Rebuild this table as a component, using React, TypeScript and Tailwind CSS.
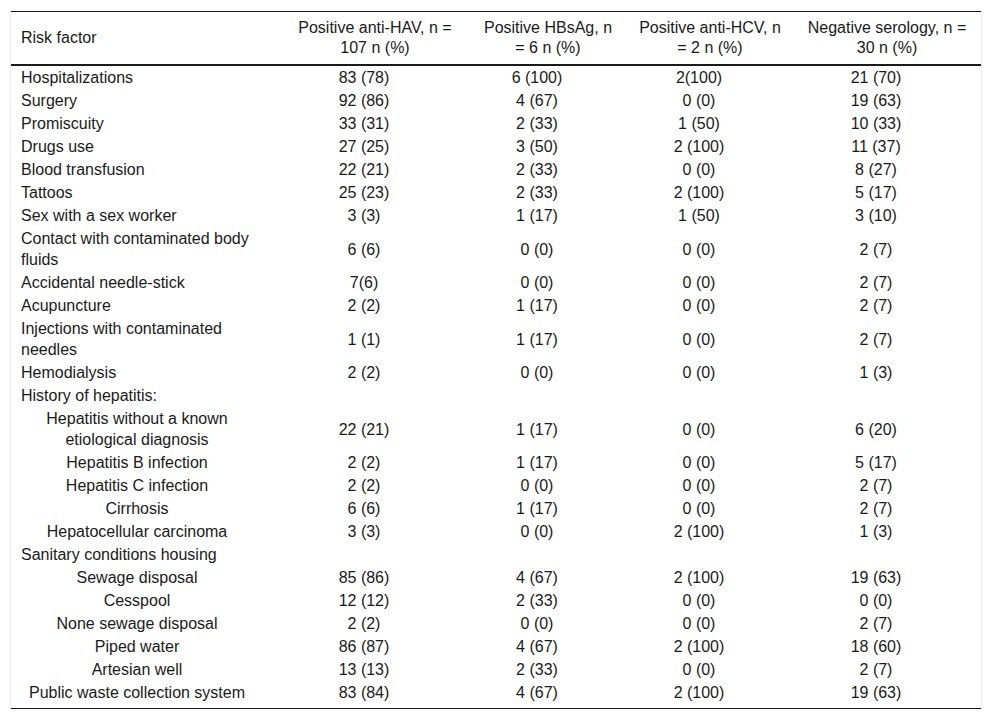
import React from 'react';

type Row = { label: string; values?: string[]; sub?: boolean };

const rows: Row[] = [
  { label: 'Hospitalizations', values: ['83 (78)', '6 (100)', '2(100)', '21 (70)'] },
  { label: 'Surgery', values: ['92 (86)', '4 (67)', '0 (0)', '19 (63)'] },
  { label: 'Promiscuity', values: ['33 (31)', '2 (33)', '1 (50)', '10 (33)'] },
  { label: 'Drugs use', values: ['27 (25)', '3 (50)', '2 (100)', '11 (37)'] },
  { label: 'Blood transfusion', values: ['22 (21)', '2 (33)', '0 (0)', '8 (27)'] },
  { label: 'Tattoos', values: ['25 (23)', '2 (33)', '2 (100)', '5 (17)'] },
  { label: 'Sex with a sex worker', values: ['3 (3)', '1 (17)', '1 (50)', '3 (10)'] },
  { label: 'Contact with contaminated body fluids', values: ['6 (6)', '0 (0)', '0 (0)', '2 (7)'] },
  { label: 'Accidental needle-stick', values: ['7(6)', '0 (0)', '0 (0)', '2 (7)'] },
  { label: 'Acupuncture', values: ['2 (2)', '1 (17)', '0 (0)', '2 (7)'] },
  { label: 'Injections with contaminated needles', values: ['1 (1)', '1 (17)', '0 (0)', '2 (7)'] },
  { label: 'Hemodialysis', values: ['2 (2)', '0 (0)', '0 (0)', '1 (3)'] },
  { label: 'History of hepatitis:' },
  { label: 'Hepatitis without a known etiological diagnosis', values: ['22 (21)', '1 (17)', '0 (0)', '6 (20)'], sub: true },
  { label: 'Hepatitis B infection', values: ['2 (2)', '1 (17)', '0 (0)', '5 (17)'], sub: true },
  { label: 'Hepatitis C infection', values: ['2 (2)', '0 (0)', '0 (0)', '2 (7)'], sub: true },
  { label: 'Cirrhosis', values: ['6 (6)', '1 (17)', '0 (0)', '2 (7)'], sub: true },
  { label: 'Hepatocellular carcinoma', values: ['3 (3)', '0 (0)', '2 (100)', '1 (3)'], sub: true },
  { label: 'Sanitary conditions housing' },
  { label: 'Sewage disposal', values: ['85 (86)', '4 (67)', '2 (100)', '19 (63)'], sub: true },
  { label: 'Cesspool', values: ['12 (12)', '2 (33)', '0 (0)', '0 (0)'], sub: true },
  { label: 'None sewage disposal', values: ['2 (2)', '0 (0)', '0 (0)', '2 (7)'], sub: true },
  { label: 'Piped water', values: ['86 (87)', '4 (67)', '2 (100)', '18 (60)'], sub: true },
  { label: 'Artesian well', values: ['13 (13)', '2 (33)', '0 (0)', '2 (7)'], sub: true },
  { label: 'Public waste collection system', values: ['83 (84)', '4 (67)', '2 (100)', '19 (63)'], sub: true },
];

// header cells: label + horizontal padding (HCV column needs a touch more room)
const headers = [
  { text: 'Positive anti-HAV, n = 107 n (%)', pad: 'px-[14px]' },
  { text: 'Positive HBsAg, n = 6 n (%)', pad: 'px-[14px]' },
  { text: 'Positive anti-HCV, n = 2 n (%)', pad: 'px-[11px]' },
  { text: 'Negative serology, n = 30 n (%)', pad: 'px-[14px]' },
];

export default function App() {
  return (
    <div className="min-h-screen bg-white text-[16px] text-[#1a1a1a] font-['Liberation_Sans',Arial,sans-serif]">
      <div className="ml-[10px] mt-[11px] w-[972px] border-x border-[#ececec]">
        <table className="w-[970px] table-fixed border-collapse">
          <colgroup>
            <col className="w-[270px]" />
            <col className="w-[188px]" />
            <col className="w-[158px]" />
            <col className="w-[166px]" />
            <col className="w-[188px]" />
          </colgroup>
          <thead>
            <tr className="border-t border-b-2 border-[#1a1a1a] leading-[20px]">
              <th className="pl-[10px] pr-[14px] pt-[6px] pb-[6px] text-left align-middle font-normal">Risk factor</th>
              {headers.map((h) => (
                <th key={h.text} className={`${h.pad} pt-[6px] pb-[6px] text-center align-middle font-normal`}>
                  {h.text}
                </th>
              ))}
            </tr>
          </thead>
          <tbody className="leading-[21px]">
            {rows.map((r, i) => {
              const last = i === rows.length - 1;
              return (
                <tr key={r.label} className={last ? 'border-b border-[#1a1a1a]' : ''}>
                  <td
                    className={`pl-[10px] pr-[28px] pt-px align-middle ${last ? 'pb-[5px]' : 'pb-px'} ${
                      r.sub ? 'text-center' : 'text-left'
                    }`}
                  >
                    {r.label}
                  </td>
                  {(r.values ?? ['', '', '', '']).map((v, j) => (
                    <td
                      key={j}
                      className={`pl-[4px] pr-[26px] pt-px text-center align-middle ${last ? 'pb-[5px]' : 'pb-px'}`}
                    >
                      {v}
                    </td>
                  ))}
                </tr>
              );
            })}
          </tbody>
        </table>
      </div>
    </div>
  );
}
